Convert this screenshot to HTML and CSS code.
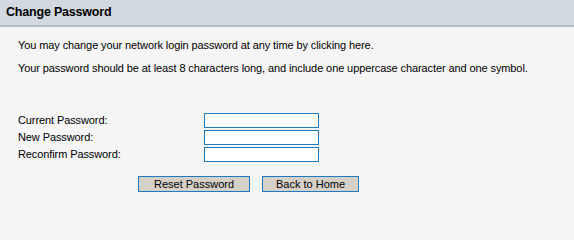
FILE: index.html
```html
<!DOCTYPE html>
<html>
<head>
<meta charset="utf-8">
<link rel="stylesheet" href="styles.css">
</head>
<body>
<div class="header">Change Password</div>
<div class="content">
  <p class="line1">You may change your network login password at any time by clicking here.</p>
  <p class="line2">Your password should be at least 8 characters long, and include one uppercase character and one symbol.</p>
  <div class="form">
    <label>Current Password:</label><input type="password" class="field">
    <label>New Password:</label><input type="password" class="field">
    <label>Reconfirm Password:</label><input type="password" class="field">
  </div>
  <div class="buttons">
    <button class="btn btn-reset">Reset Password</button>
    <button class="btn btn-home">Back to Home</button>
  </div>
</div>
</body>
</html>
```
FILE: styles.css
```css
html, body {
  margin: 0;
  padding: 0;
  background: #f5f5f5;
  font-family: "Liberation Sans", Arial, sans-serif;
  font-size: 11px;
  color: #000;
}
.header {
  height: 27px;
  line-height: 25px;
  background: #d3d9e0;
  border-bottom: 2px solid #b5bbc3;
  padding-left: 6px;
  font-weight: bold;
  font-size: 12.5px;
  letter-spacing: -0.2px;
  box-sizing: border-box;
}
.content {
  padding-left: 18px;
  letter-spacing: -0.1px;
}
.content p {
  margin: 0;
  line-height: 13px;
}
.line1 {
  padding-top: 12px;
}
.line2 {
  padding-top: 10px;
}
.form {
  display: grid;
  grid-template-columns: 186px 115px;
  grid-auto-rows: 15px;
  row-gap: 2px;
  margin-top: 38px;
  align-items: center;
}
.form label {
  line-height: 15px;
}
.field {
  width: 115px;
  height: 15px;
  box-sizing: border-box;
  border: 1px solid #1f7ac0;
  background: #fff;
  padding: 0;
  margin: 0;
}
.buttons {
  display: flex;
  gap: 12px;
  margin-top: 14px;
  margin-left: 120px;
}
.btn {
  height: 16px;
  box-sizing: border-box;
  border: 1px solid #1f7ac0;
  background: #d5d1c9;
  font-family: "Liberation Sans", Arial, sans-serif;
  font-size: 11px;
  color: #000;
  padding: 0;
  margin: 0;
  line-height: 14px;
}
.btn-reset { width: 112px; }
.btn-home { width: 97px; }
```
